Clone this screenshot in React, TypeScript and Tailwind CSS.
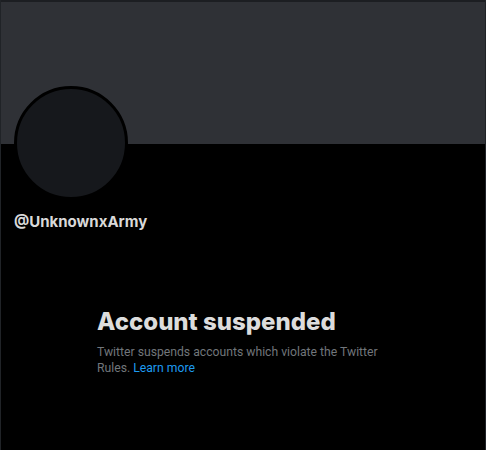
export default function App() {
  return (
    <div className="w-[486px] h-[450px] bg-black border-x border-[#202327] overflow-hidden font-['Inter',sans-serif]">
      <div className="h-[144px] bg-[#2f3136] border-t-2 border-[#1c1e22]" />
      <div className="ml-[13px] -mt-[58px] w-[114px] h-[114px] rounded-full bg-[#16181c] border-[3px] border-black" />
      <div className="ml-[13px] mt-[12px] text-[15px] leading-5 font-bold text-[#d9d9d9]">
        @UnknownxArmy
      </div>
      <div className="pl-[96px] pt-[76px]">
        <h1 className="text-[24px] leading-[28px] font-extrabold text-[#dcdcdc]">
          Account suspended
        </h1>
        <p className="mt-[8px] w-[290px] font-['Roboto',sans-serif] text-[12.2px] leading-[16px] text-[#71767b]">
          Twitter suspends accounts which violate the Twitter Rules.{" "}
          <span className="text-[#1d9bf0]">Learn more</span>
        </p>
      </div>
    </div>
  );
}
